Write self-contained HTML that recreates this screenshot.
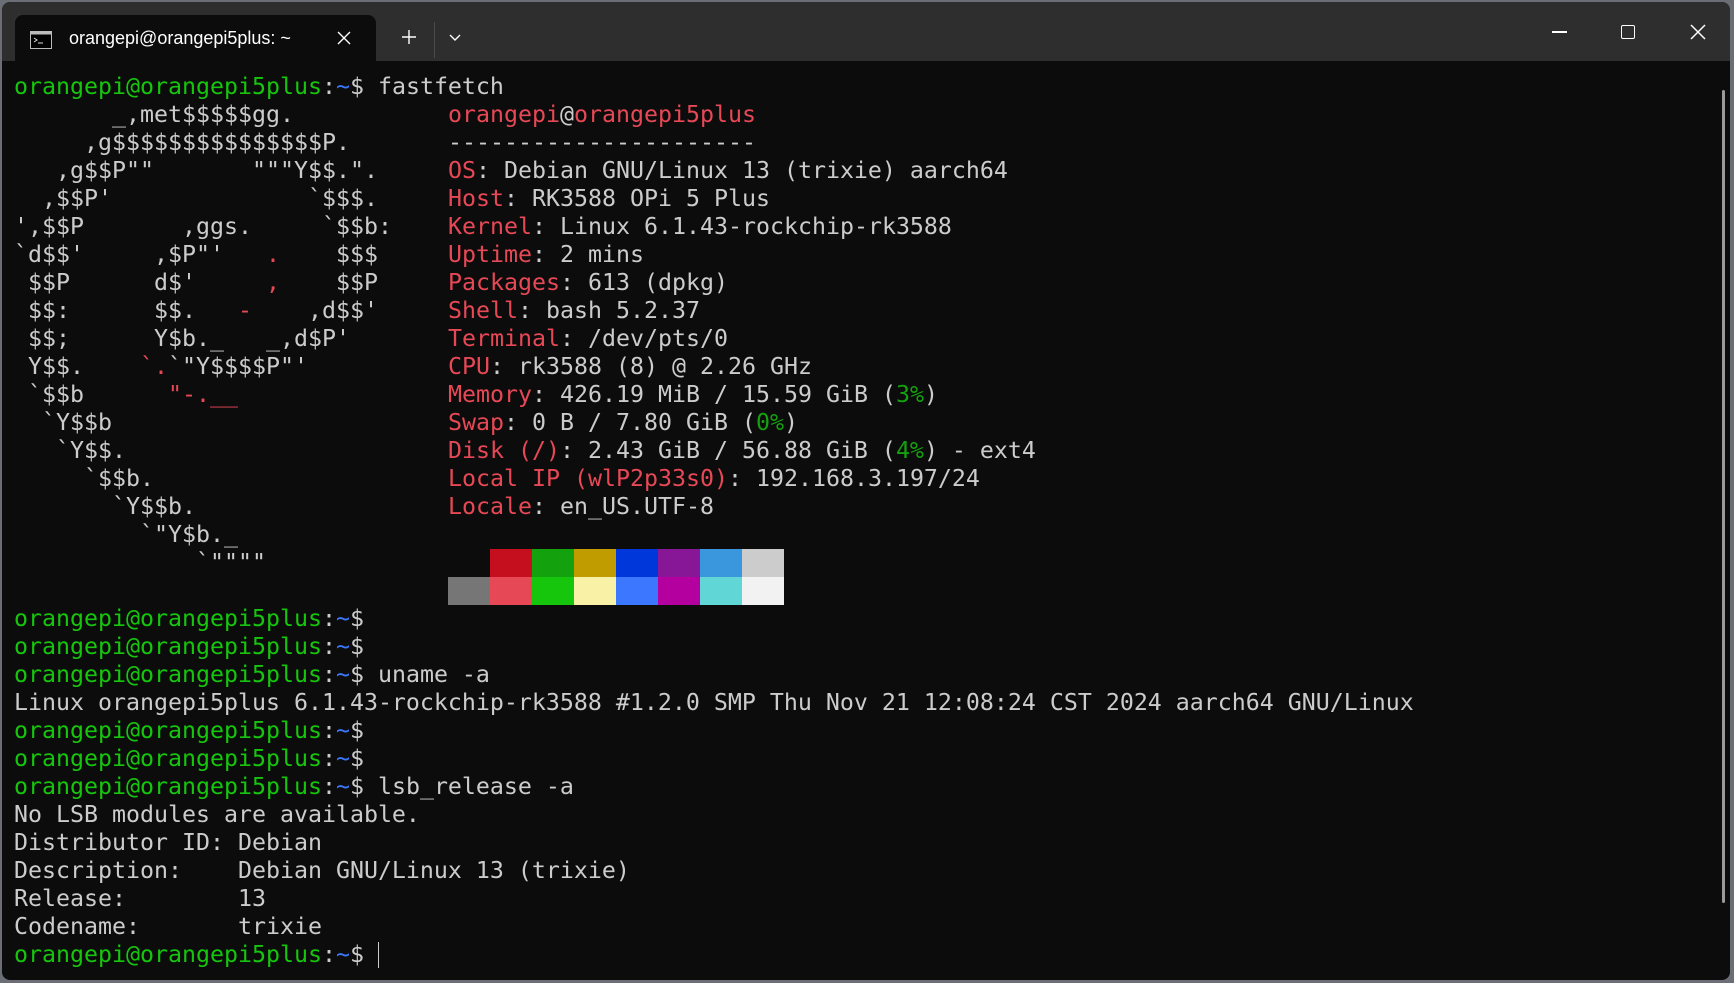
<!DOCTYPE html>
<html><head><meta charset="utf-8"><style>
html,body{margin:0;padding:0;}
body{width:1734px;height:983px;background:#6b6f75;position:relative;overflow:hidden;}
.win{position:absolute;left:2px;top:2px;width:1728px;height:978px;background:#0c0c0c;border-radius:8px 8px 8px 8px;overflow:hidden;}
.bar{position:absolute;left:0;top:0;width:100%;height:59px;background:#2e2e2e;}
.tab{position:absolute;left:13px;top:13px;width:361px;height:46px;background:#0c0c0c;border-radius:8px 8px 0 0;}
.tabt{position:absolute;left:67px;top:26px;font:18px "Liberation Sans",sans-serif;color:#fff;}
.mono{font-family:"DejaVu Sans Mono",monospace;font-size:23.25px;line-height:28px;white-space:pre;color:#cccccc;}
.term{position:absolute;left:12px;top:71px;}
.info{position:absolute;left:446px;top:99px;}
.g{color:#16c60c}.b{color:#3b78ff}.r{color:#e74856}.gg{color:#13a10e}
.pal{position:absolute;left:446px;display:flex;}
.pal div{width:42px;height:28px;}
.sb{position:absolute;left:1720px;top:88px;width:3px;height:813px;background:#9a9a9a;border-radius:2px;}
</style></head><body>
<div class="win">
<div class="bar"></div>
<div class="tab"></div>
<svg style="position:absolute;left:28px;top:29px" width="22" height="18" viewBox="0 0 22 18"><rect x="0.5" y="0.5" width="21" height="17" fill="#000" stroke="#bbb"/><rect x="0.5" y="0.5" width="21" height="3" fill="#bbb"/><path d="M4 7l3 2-3 2M8 12h5" stroke="#ddd" fill="none"/></svg>
<div class="tabt">orangepi@orangepi5plus: ~</div>
<svg style="position:absolute;left:334px;top:28px" width="16" height="16"><path d="M2 2L14 14M14 2L2 14" stroke="#fff" stroke-width="1.4"/></svg>
<svg style="position:absolute;left:398px;top:26px" width="18" height="18"><path d="M9 2V16M2 9H16" stroke="#fff" stroke-width="1.4"/></svg>
<div style="position:absolute;left:432px;top:20px;width:1px;height:36px;background:#4a4a4a"></div>
<svg style="position:absolute;left:446px;top:31px" width="14" height="10"><path d="M2 2L7 7L12 2" stroke="#fff" stroke-width="1.4" fill="none"/></svg>
<div style="position:absolute;left:1550px;top:29px;width:15px;height:1.5px;background:#fff"></div>
<div style="position:absolute;left:1619px;top:23px;width:12px;height:12px;border:1.5px solid #fff;border-radius:2px"></div>
<svg style="position:absolute;left:1687px;top:21px" width="18" height="18"><path d="M2 2L16 16M16 2L2 16" stroke="#fff" stroke-width="1.5"/></svg>
<div class="sb"></div>
<div class="mono term"><span class="g">orangepi@orangepi5plus</span>:<span class="b">~</span>$ fastfetch
       _,met$$$$$gg.
     ,g$$$$$$$$$$$$$$$P.
   ,g$$P""       """Y$$.".
  ,$$P'              `$$$.
',$$P       ,ggs.     `$$b:
`d$$'     ,$P"'   <span class="r">.</span>    $$$
 $$P      d$'     <span class="r">,</span>    $$P
 $$:      $$.   <span class="r">-</span>    ,d$$'
 $$;      Y$b._   _,d$P'
 Y$$.    <span class="r">`.</span>`"Y$$$$P"'
 `$$b      <span class="r">"-.__</span>
  `Y$$b
   `Y$$.
     `$$b.
       `Y$$b.
         `"Y$b._
             `""""

<span class="g">orangepi@orangepi5plus</span>:<span class="b">~</span>$
<span class="g">orangepi@orangepi5plus</span>:<span class="b">~</span>$
<span class="g">orangepi@orangepi5plus</span>:<span class="b">~</span>$ uname -a
Linux orangepi5plus 6.1.43-rockchip-rk3588 #1.2.0 SMP Thu Nov 21 12:08:24 CST 2024 aarch64 GNU/Linux
<span class="g">orangepi@orangepi5plus</span>:<span class="b">~</span>$
<span class="g">orangepi@orangepi5plus</span>:<span class="b">~</span>$
<span class="g">orangepi@orangepi5plus</span>:<span class="b">~</span>$ lsb_release -a
No LSB modules are available.
Distributor ID: Debian
Description:    Debian GNU/Linux 13 (trixie)
Release:        13
Codename:       trixie
<span class="g">orangepi@orangepi5plus</span>:<span class="b">~</span>$ <span style="display:inline-block;width:1.5px;height:26px;background:#ccc;vertical-align:-6px"></span></div>
<div class="mono info"><span class="r">orangepi</span>@<span class="r">orangepi5plus</span>
----------------------
<span class="r">OS</span>: Debian GNU/Linux 13 (trixie) aarch64
<span class="r">Host</span>: RK3588 OPi 5 Plus
<span class="r">Kernel</span>: Linux 6.1.43-rockchip-rk3588
<span class="r">Uptime</span>: 2 mins
<span class="r">Packages</span>: 613 (dpkg)
<span class="r">Shell</span>: bash 5.2.37
<span class="r">Terminal</span>: /dev/pts/0
<span class="r">CPU</span>: rk3588 (8) @ 2.26 GHz
<span class="r">Memory</span>: 426.19 MiB / 15.59 GiB (<span class="gg">3%</span>)
<span class="r">Swap</span>: 0 B / 7.80 GiB (<span class="gg">0%</span>)
<span class="r">Disk (/)</span>: 2.43 GiB / 56.88 GiB (<span class="gg">4%</span>) - ext4
<span class="r">Local IP (wlP2p33s0)</span>: 192.168.3.197/24
<span class="r">Locale</span>: en_US.UTF-8</div>
<div class="pal" style="top:547px"><div style="background:#0c0c0c"></div><div style="background:#c50f1f"></div><div style="background:#13a10e"></div><div style="background:#c19c00"></div><div style="background:#0037da"></div><div style="background:#881798"></div><div style="background:#3a96dd"></div><div style="background:#cccccc"></div></div>
<div class="pal" style="top:575px"><div style="background:#767676"></div><div style="background:#e74856"></div><div style="background:#16c60c"></div><div style="background:#f9f1a5"></div><div style="background:#3b78ff"></div><div style="background:#b4009e"></div><div style="background:#61d6d6"></div><div style="background:#f2f2f2"></div></div>
</div>
</body></html>
